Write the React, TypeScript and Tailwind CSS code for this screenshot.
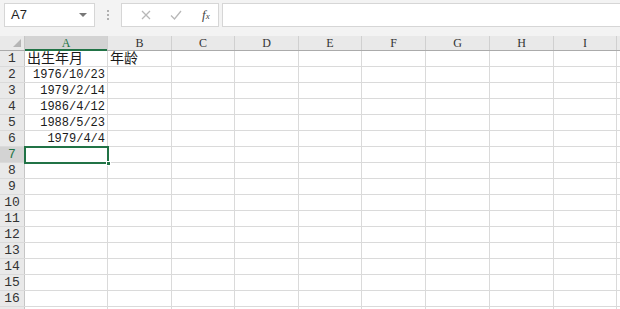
const cols = [
  { label: "A", w: "w-[83px]" },
  { label: "B", w: "w-[64px]" },
  { label: "C", w: "w-[63px]" },
  { label: "D", w: "w-[64px]" },
  { label: "E", w: "w-[63px]" },
  { label: "F", w: "w-[64px]" },
  { label: "G", w: "w-[64px]" },
  { label: "H", w: "w-[64px]" },
  { label: "I", w: "w-[63px]" },
  { label: "", w: "w-[20px]" },
];

const data: Record<number, string[]> = {
  1: ["出生年月", "年龄"],
  2: ["1976/10/23"],
  3: ["1979/2/14"],
  4: ["1986/4/12"],
  5: ["1988/5/23"],
  6: ["1979/4/4"],
};

const rows = Array.from({ length: 17 }, (_, i) => i + 1);

export default function App() {
  return (
    <div className="relative h-[309px] w-[620px] overflow-hidden bg-white font-['Liberation_Mono','Noto_Sans_CJK_SC',monospace] text-[#1a1a1a]">
      <FormulaBar />

      <div className="flex h-[15px] border-b border-[#ababab] bg-[#e9e9e9]">
        <div className="relative w-[25px] shrink-0 border-r border-[#c6c6c6]">
          <div className="absolute bottom-[3px] right-[3px] h-0 w-0 border-b-[8px] border-l-[8px] border-b-[#b5b5b5] border-l-transparent" />
        </div>
        {cols.map((c) => (
          <div
            key={c.label || "x"}
            className={`${c.w} shrink-0 border-r border-[#d0d0d0] text-center font-['Liberation_Serif',serif] text-[12px] leading-[15px] ${
              c.label === "A"
                ? "relative bg-[#d3d3d3] text-[#217346]"
                : "text-[#333]"
            }`}
          >
            {c.label}
            {c.label === "A" && (
              <div className="absolute -bottom-px left-0 h-[2px] w-full bg-[#217346]" />
            )}
          </div>
        ))}
      </div>

      <div>
        {rows.map((r) => (
          <div key={r} className="flex h-[16px] border-b border-[#dadada]">
            <div
              className={`w-[25px] shrink-0 border-r border-[#c6c6c6] text-center text-[13px] leading-[16px] ${
                r === 7 ? "bg-[#d3d3d3] text-[#217346]" : "bg-[#e9e9e9] text-[#333]"
              }`}
            >
              {r < 17 ? r : ""}
            </div>
            {cols.map((c, ci) => {
              const v = data[r]?.[ci];
              const isText = r === 1;
              return (
                <div
                  key={ci}
                  className={`${c.w} shrink-0 overflow-visible whitespace-nowrap border-r border-[#dadada] ${
                    isText
                      ? "pl-[2px] text-left text-[14px] leading-[17px]"
                      : "pr-[2px] text-right text-[12px] leading-[17px]"
                  }`}
                >
                  {v}
                </div>
              );
            })}
          </div>
        ))}
      </div>

      {/* active cell A7 */}
      <div className="absolute left-[24px] top-[146px] h-[18px] w-[85px] border-2 border-[#217346]">
        <div className="absolute -bottom-[4px] -right-[4px] h-[5px] w-[5px] border border-white bg-[#217346]" />
      </div>
    </div>
  );
}

function FormulaBar() {
  return (
    <div className="flex h-[36px] items-start bg-[#f3f3f3] pl-[4px] pt-[3px]">
      <div className="flex h-[24px] w-[91px] items-center justify-between border border-[#d6d6d6] bg-white pl-[6px] pr-[7px]">
        <span className="font-['Liberation_Sans',sans-serif] text-[13px] text-[#222]">A7</span>
        <span className="h-0 w-0 border-x-[4px] border-t-[4px] border-x-transparent border-t-[#777]" />
      </div>
      <div className="flex h-[24px] w-[26px] flex-col items-center justify-center gap-[2px]">
        <span className="h-[2px] w-[2px] bg-[#b0b0b0]" />
        <span className="h-[2px] w-[2px] bg-[#b0b0b0]" />
        <span className="h-[2px] w-[2px] bg-[#b0b0b0]" />
      </div>
      <div className="flex h-[24px] w-[98px] items-center border border-[#d6d6d6] bg-white">
        <svg className="ml-[19px]" width="10" height="10" viewBox="0 0 10 10">
          <path d="M1 1 L9 9 M9 1 L1 9" stroke="#b8b8b8" strokeWidth="1.3" fill="none" />
        </svg>
        <svg className="ml-[19px]" width="12" height="10" viewBox="0 0 12 10">
          <path d="M1 5.5 L4.5 9 L11 1" stroke="#b8b8b8" strokeWidth="1.3" fill="none" />
        </svg>
        <span className="ml-[20px] font-['Liberation_Serif',serif] text-[13px] italic text-[#444]">
          f<span className="text-[9px]">x</span>
        </span>
      </div>
      <div className="ml-[3px] h-[24px] flex-1 border border-r-0 border-[#d6d6d6] bg-white" />
    </div>
  );
}
